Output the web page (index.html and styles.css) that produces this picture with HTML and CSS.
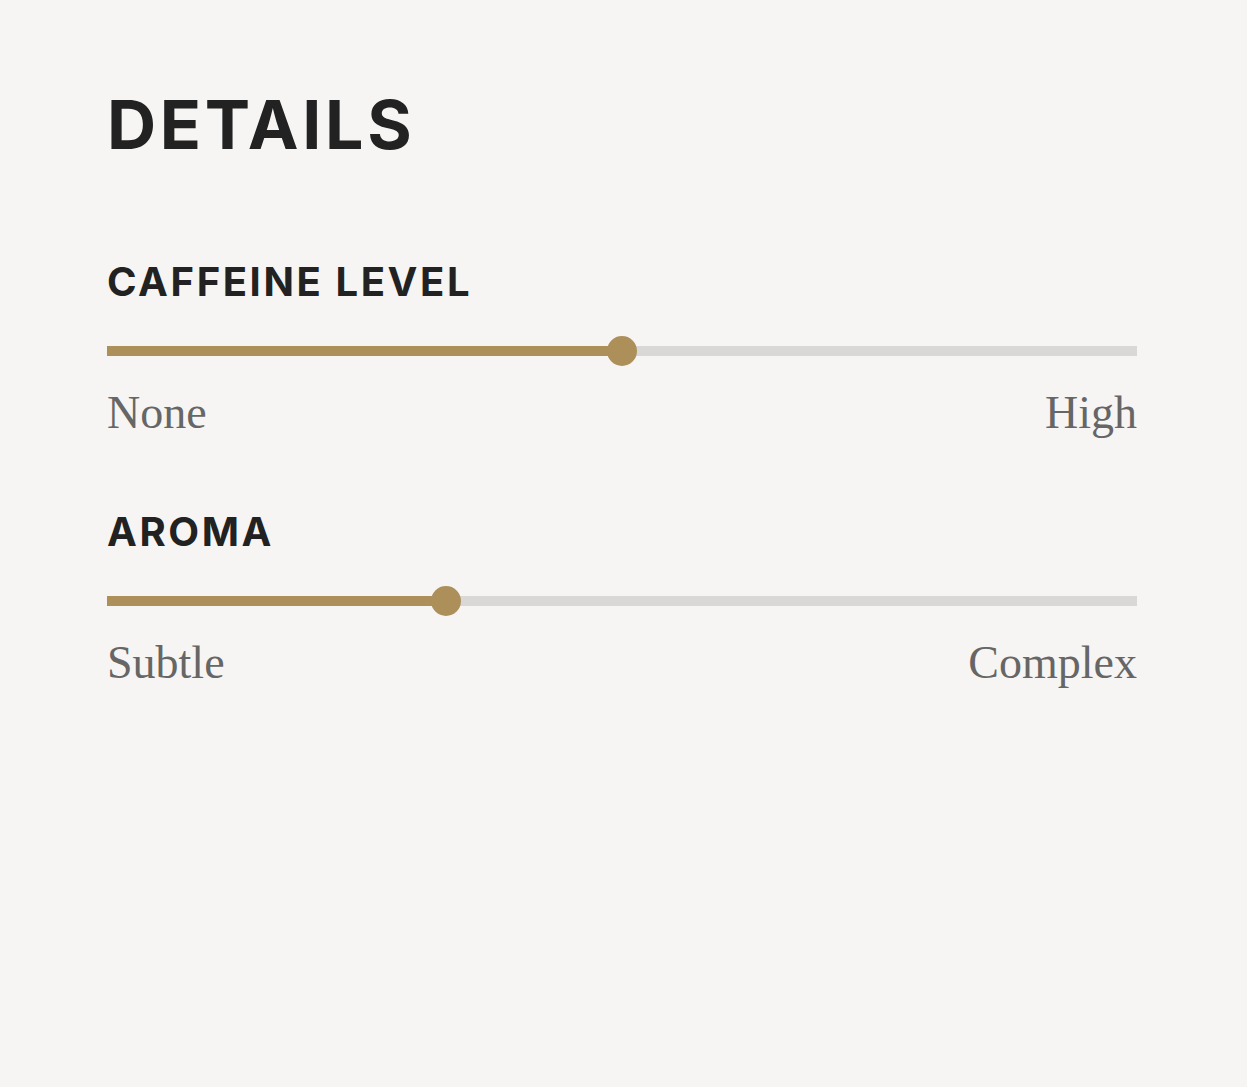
FILE: index.html
```html
<!DOCTYPE html>
<html lang="en">
<head>
<meta charset="utf-8">
<title>Details</title>
<link rel="stylesheet" href="styles.css">
</head>
<body>
<main class="panel">
  <h2 class="title">DETAILS</h2>
  <section class="attr">
    <h3 class="attr-name">CAFFEINE LEVEL</h3>
    <div class="track">
      <div class="fill" style="width: 50%"></div>
      <div class="thumb" style="left: calc(15px + (100% - 30px) * 0.5)"></div>
    </div>
    <div class="ends"><span>None</span><span>High</span></div>
  </section>
  <section class="attr">
    <h3 class="attr-name">AROMA</h3>
    <div class="track">
      <div class="fill" style="width: calc(15px + (100% - 30px) * 0.324)"></div>
      <div class="thumb" style="left: calc(15px + (100% - 30px) * 0.324)"></div>
    </div>
    <div class="ends"><span>Subtle</span><span>Complex</span></div>
  </section>
</main>
</body>
</html>
```
FILE: styles.css
```css
html, body {
  margin: 0;
  padding: 0;
  background: #f6f5f3;
}
body {
  font-family: Inter, "Liberation Sans", sans-serif;
  color: #222222;
  min-height: 1087px;
}
.panel {
  padding: 90px 110px 0 107px;
}
.title {
  margin: 0;
  font-size: 68px;
  line-height: 68px;
  font-weight: 700;
  letter-spacing: 3.7px;
}
.attr {
  margin-top: 104px;
}
.attr + .attr {
  margin-top: 76px;
}
.attr-name {
  margin: 0;
  font-size: 40px;
  line-height: 40px;
  font-weight: 700;
  letter-spacing: 2.6px;
}
.track {
  position: relative;
  margin-top: 44px;
  height: 10px;
  background: #d9d8d6;
}
.fill {
  height: 100%;
  background: #ad8f5a;
}
.thumb {
  position: absolute;
  top: 50%;
  width: 30px;
  height: 30px;
  margin: -15px 0 0 -15px;
  border-radius: 50%;
  background: #ad8f5a;
}
.ends {
  display: flex;
  justify-content: space-between;
  margin-top: 34px;
  font-family: "Liberation Serif", "Times New Roman", serif;
  font-size: 46px;
  line-height: 46px;
  color: #666666;
}
```
